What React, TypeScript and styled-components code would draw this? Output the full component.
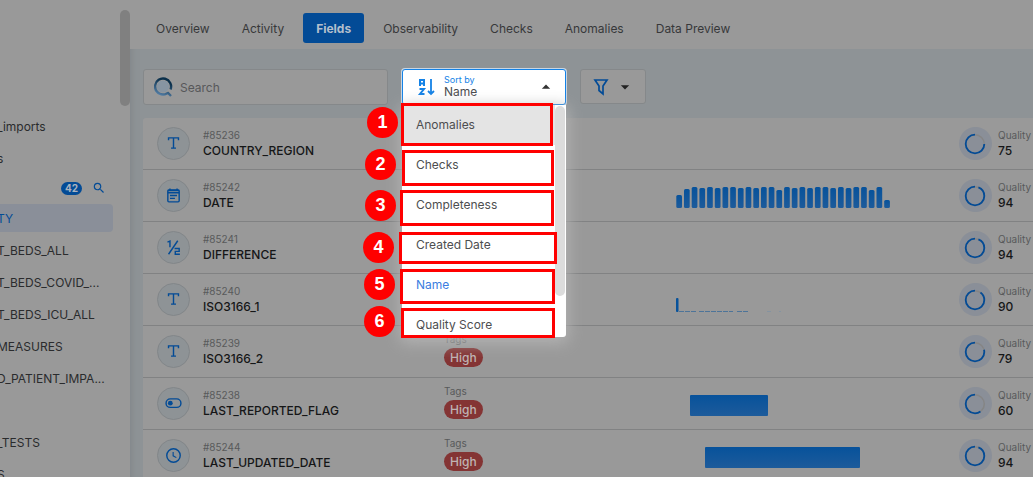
import React from 'react';
import styled, { createGlobalStyle } from 'styled-components';
import { MdArrowDropDown, MdArrowDropUp, MdSearch } from 'react-icons/md';

const GlobalStyle = createGlobalStyle`
  *, *::before, *::after { box-sizing: border-box; }
  body { margin: 0; background: #999999; color: #2a2b2d; font-family: Inter, 'Liberation Sans', sans-serif; font-size: 12px; }
  button, input { font: inherit; color: inherit; }
  ul { list-style: none; margin: 0; padding: 0; }
  a { color: inherit; text-decoration: none; }
`;

const Shell = styled.div`
  display: flex;
  height: 100vh;
  overflow: hidden;
`;

const Sidebar = styled.aside`
  display: flex;
  flex: 0 0 130px;
  justify-content: space-between;
  overflow: hidden;
`;

const SideContent = styled.div`
  width: 113px;
  padding-top: 112px;
`;

const ScrollThumb = styled.div`
  width: 10px;
  height: 96px;
  margin-top: 10px;
  border-radius: 5px;
  background: #808080;
`;

const SideLink = styled.a<{ $active?: boolean }>`
  display: flex;
  align-items: center;
  height: 28px;
  margin-bottom: 4px;
  text-indent: -3px;
  white-space: nowrap;
  border-radius: 0 4px 4px 0;
  background: ${(p) => (p.$active ? '#8a8f99' : 'transparent')};
  color: ${(p) => (p.$active ? '#034b96' : '#2a2b2d')};
`;

const SideTools = styled.div`
  display: flex;
  align-items: center;
  justify-content: flex-end;
  gap: 10px;
  height: 24px;
  margin-bottom: 4px;
  padding-right: 7px;
`;

const Count = styled.span`
  width: 21px;
  border-radius: 7px;
  background: #034b96;
  color: #aab4bf;
  font-size: 10px;
  font-weight: 700;
  line-height: 13px;
  text-align: center;
`;

const IconButton = styled.button`
  display: flex;
  padding: 0;
  border: 0;
  background: none;
  color: #034b96;
`;

const Main = styled.main`
  flex: 1;
  min-width: 0;
  background: #8e9396;
  box-shadow: inset 8px 0 8px -8px #7c8084;
`;

const Tabs = styled.nav`
  display: flex;
  align-items: flex-start;
  gap: 6px;
  height: 49px;
  padding: 13px 12px 0 13px;
  background: #999999;
`;

const Tab = styled.button<{ $active?: boolean }>`
  height: 30px;
  padding: 0 13px;
  border: 0;
  border-radius: 3px;
  white-space: nowrap;
  background: ${(p) => (p.$active ? '#034b96' : 'transparent')};
  color: ${(p) => (p.$active ? '#b3bfcc' : '#37383a')};
  font-weight: ${(p) => (p.$active ? 700 : 400)};
`;

const Toolbar = styled.div`
  display: flex;
  gap: 14px;
  padding: 20px 13px 13px;
`;

const SearchBox = styled.label`
  display: flex;
  align-items: center;
  gap: 4px;
  width: 245px;
  height: 36px;
  padding-left: 10px;
  border: 1px solid #85888a;
  border-radius: 3px;
  background: #999999;
`;

const SearchInput = styled.input`
  flex: 1;
  min-width: 0;
  border: 0;
  outline: 0;
  background: none;
  &::placeholder { color: #57585a; opacity: 1; }
`;

const SortWrap = styled.div`
  position: relative;
  width: 164px;
`;

const SortButton = styled.button`
  display: flex;
  align-items: center;
  width: 100%;
  height: 36px;
  padding: 0 9px 0 14px;
  border: 1px solid #1482e6;
  border-radius: 3px;
  background: #ffffff;
  color: #4a4b4d;
  text-align: left;
  box-shadow: 0 0 0 1px #c8d6e4;
`;

const SortText = styled.span`
  flex: 1;
  padding-left: 9px;
  line-height: 14px;
`;

const SortCaption = styled.span`
  display: block;
  color: #1482e6;
  font-size: 9px;
  line-height: 10px;
`;

const Menu = styled.ul`
  position: absolute;
  z-index: 2;
  top: 36px;
  left: 0;
  width: 164px;
  height: 232px;
  border-radius: 0 0 3px 3px;
  background: #ffffff;
  box-shadow: 0 4px 16px 2px #b4b4b4;
`;

const MenuItem = styled.li<{ $hover?: boolean; $selected?: boolean }>`
  width: 153px;
  height: 40px;
  padding-left: 14px;
  line-height: 40px;
  background: ${(p) => (p.$hover ? '#e4e4e4' : 'transparent')};
  color: ${(p) => (p.$selected ? '#3b7de0' : '#4d4e50')};
`;

const MenuThumb = styled.div`
  position: absolute;
  top: 1px;
  right: 1px;
  width: 10px;
  height: 190px;
  border-radius: 5px;
  background: #dcdcdc;
`;

const Outline = styled.div<{ $x: number; $y: number; $w: number; $h: number }>`
  position: absolute;
  z-index: 3;
  left: ${(p) => p.$x}px;
  top: ${(p) => p.$y}px;
  width: ${(p) => p.$w}px;
  height: ${(p) => p.$h}px;
  border: 3px solid #ff0000;
`;

const Marker = styled.span<{ $x: number; $y: number }>`
  position: absolute;
  z-index: 4;
  left: ${(p) => p.$x}px;
  top: ${(p) => p.$y}px;
  width: 31px;
  height: 31px;
  border-radius: 50%;
  background: #ff0000;
  color: #ffffff;
  font-family: 'Liberation Sans', sans-serif;
  font-size: 18px;
  font-weight: 700;
  line-height: 31px;
  text-align: center;
`;

const FilterButton = styled.button`
  display: flex;
  align-items: center;
  gap: 5px;
  width: 66px;
  height: 35px;
  padding: 0 10px 0 11px;
  border: 1px solid #85888a;
  border-radius: 3px;
  background: #999999;
`;

const List = styled.ul`
  margin-left: 13px;
  background: #999999;
  border-radius: 3px 0 0 0;
`;

const Row = styled.li`
  display: grid;
  grid-template-columns: 46px 241px 232px 1fr 74px;
  align-items: center;
  height: 52px;
  padding-left: 14px;
  border-bottom: 1px solid #818283;
`;

const Round = styled.span`
  display: flex;
  align-items: center;
  justify-content: center;
  width: 33px;
  height: 33px;
  border: 1px solid #828689;
  border-radius: 50%;
  background: #8e9396;
  color: #034b96;
`;

const Stack = styled.div`
  display: flex;
  flex-direction: column;
  align-items: flex-start;
`;

const TagStack = styled(Stack)`
  gap: 2px;
  padding-bottom: 4px;
`;

const Small = styled.span`
  color: #58595b;
  font-size: 10px;
  line-height: 14px;
`;

const Name = styled.span`
  color: #151617;
  font-weight: 500;
  line-height: 18px;
`;

const Tag = styled.span`
  height: 19px;
  padding: 0 6px;
  border-radius: 10px;
  background: #843434;
  color: #bfb3b3;
  font-weight: 500;
  line-height: 19px;
`;

const Quality = styled.div`
  display: flex;
  align-items: center;
  gap: 6px;
`;

const stroke = { fill: 'none', stroke: 'currentColor', strokeWidth: 2 } as const;

const icons: Record<string, React.ReactNode> = {
  text: <path {...stroke} d="M5 7.500V4H19V7.500M12 4V18.500M8.500 18.500H15.500" />,
  date: (
    <>
      <rect {...stroke} x="4" y="4" width="16" height="17" rx="1.500" />
      <path {...stroke} d="M4 5H20M4 8H20M7 2V5M17 2V5M7 12H17M7 16H14" />
    </>
  ),
  fraction: <path {...stroke} d="M3.500 4.500L7 3V11.500M18 2.500L5 21.500M13.500 13.500H20V17.500H14.500V21.500H21" />,
  toggle: (
    <>
      <rect {...stroke} x="1.500" y="5.500" width="21" height="12" rx="6" />
      <circle cx="7.500" cy="11.500" r="3.400" fill="currentColor" />
    </>
  ),
  clock: (
    <>
      <circle {...stroke} cx="12" cy="12" r="9.500" />
      <path {...stroke} strokeWidth={1.600} d="M11.500 7V12.500L16 15" />
    </>
  ),
};

const TypeIcon = ({ kind }: { kind: string }) => (
  <svg width="17" height="17" viewBox="0 0 24 24" aria-hidden="true">{icons[kind]}</svg>
);

const Ring = ({ value }: { value: number }) => (
  <svg width="33" height="33" viewBox="0 0 33 33" aria-hidden="true">
    <circle cx="16.500" cy="16.500" r="16.500" fill="#8a8f98" />
    <circle cx="16" cy="17" r="9.300" fill="none" stroke="#858585" strokeWidth="1.500" />
    <circle
      cx="16" cy="17" r="9.300" fill="none" stroke="#034b96" strokeWidth="1.800"
      pathLength={100} strokeDasharray={`${value} 100`} transform="matrix(0 -1 -1 0 33 33)"
    />
  </svg>
);

const bars = [13, 19, 21, 20, 21, 20, 21, 21, 20, 21, 20, 21, 21, 18, 21, 20, 21, 20, 21, 21, 20, 21, 20, 21, 21, 18, 21, 8];

const Chart = ({ kind }: { kind?: string }) => (
  <svg width="220" height="24" viewBox="0 0 220 24" aria-hidden="true">
    <defs>
      <linearGradient id="bar" x1="0" y1="0" x2="0" y2="1">
        <stop offset="0" stopColor="#07529b" />
        <stop offset="1" stopColor="#1d5b9b" />
      </linearGradient>
    </defs>
    {kind === 'bars' && bars.map((h, i) => (
      <rect key={i} x={i * 7.700 + 0.300} y={24 - h} width="5.700" height={h} rx="1.500" fill="url(#bar)" />
    ))}
    {kind === 'tail' && (
      <>
        <rect x="0" y="10" width="2.500" height="14" rx="1" fill="#07529b" />
        <path d="M3 23.500H20M23 23.500H57M61 23.500H72" stroke="#4d7499" strokeDasharray="5 1" />
        <path d="M91 23.500H95M103 23.500H105" stroke="#8593a0" />
      </>
    )}
    {kind === 'short' && <rect x="14" y="3" width="78" height="21" rx="1" fill="url(#bar)" />}
    {kind === 'long' && <rect x="29" y="3" width="155" height="21" rx="1" fill="url(#bar)" />}
  </svg>
);

const rows = [
  { id: '#85236', name: 'COUNTRY_REGION', icon: 'text', score: 75 },
  { id: '#85242', name: 'DATE', icon: 'date', score: 94, chart: 'bars' },
  { id: '#85241', name: 'DIFFERENCE', icon: 'fraction', score: 94 },
  { id: '#85240', name: 'ISO3166_1', icon: 'text', score: 90, chart: 'tail' },
  { id: '#85239', name: 'ISO3166_2', icon: 'text', score: 79, tag: 'High' },
  { id: '#85238', name: 'LAST_REPORTED_FLAG', icon: 'toggle', score: 60, tag: 'High', chart: 'short' },
  { id: '#85244', name: 'LAST_UPDATED_DATE', icon: 'clock', score: 94, tag: 'High', chart: 'long' },
];

const tabs = ['Overview', 'Activity', 'Fields', 'Observability', 'Checks', 'Anomalies', 'Data Preview'];
const options = ['Anomalies', 'Checks', 'Completeness', 'Created Date', 'Name', 'Quality Score'];
const tables = ['TY', 'T_BEDS_ALL', 'T_BEDS_COVID_...', 'T_BEDS_ICU_ALL', 'MEASURES', 'D_PATIENT_IMPA...', '', '_TESTS', 'S'];

const callouts = [
  { x: -1, y: 34, w: 152, h: 43, mx: -35, my: 38 },
  { x: 0, y: 81, w: 152, h: 36, mx: -37, my: 80 },
  { x: -2, y: 121, w: 154, h: 36, mx: -37, my: 121 },
  { x: -3, y: 163, w: 158, h: 32, mx: -39, my: 163 },
  { x: -2, y: 200, w: 155, h: 35, mx: -38, my: 200 },
  { x: -1, y: 239, w: 154, h: 30, mx: -38, my: 237 },
];

export default function App() {
  return (
    <Shell>
      <GlobalStyle />
      <Sidebar>
        <SideContent>
          <SideLink href="#imports">_imports</SideLink>
          <SideLink href="#s">s</SideLink>
          <SideTools>
            <Count>42</Count>
            <IconButton aria-label="Search tables"><MdSearch size={14} /></IconButton>
          </SideTools>
          {tables.map((label, i) => (
            <SideLink key={i} href="#table" $active={i === 0}>{label}</SideLink>
          ))}
        </SideContent>
        <ScrollThumb />
      </Sidebar>
      <Main>
        <Tabs>
          {tabs.map((t) => <Tab key={t} $active={t === 'Fields'}>{t}</Tab>)}
        </Tabs>
        <Toolbar>
          <SearchBox>
            <svg width="20" height="20" viewBox="0 0 20 20" aria-hidden="true">
              <defs>
                <linearGradient id="logo" x1="0.800" y1="0" x2="0.400" y2="1">
                  <stop offset="0.200" stopColor="#0b304b" />
                  <stop offset="1" stopColor="#527da5" />
                </linearGradient>
              </defs>
              <circle cx="9" cy="9.500" r="6" fill="#8795a2" />
              <path d="M16.500 12.500A8 8 0 1 0 9 17.500C12 17.500 13 16 14 16L17 19" fill="none" stroke="url(#logo)" strokeWidth="2.400" />
            </svg>
            <SearchInput placeholder="Search" aria-label="Search" />
          </SearchBox>
          <SortWrap>
            <SortButton aria-haspopup="listbox" aria-expanded="true">
              <svg width="18" height="18" viewBox="0 0 18 18" fill="none" stroke="#1482e6" strokeWidth="2" aria-hidden="true">
                <path d="M3 8V2H7V8M3 5.500H7M2.500 11H7L3 16H7.500" />
                <path d="M14 1V15M11 13L14 16L17 13" strokeWidth="1.800" />
              </svg>
              <SortText><SortCaption>Sort by</SortCaption>Name</SortText>
              <MdArrowDropUp size={20} color="#333333" />
            </SortButton>
            <Menu role="listbox">
              {options.map((o) => (
                <MenuItem key={o} role="option" $hover={o === 'Anomalies'} $selected={o === 'Name'}>{o}</MenuItem>
              ))}
              <MenuThumb />
            </Menu>
            {callouts.map((c, i) => (
              <React.Fragment key={i}>
                <Outline $x={c.x} $y={c.y} $w={c.w} $h={c.h} />
                <Marker $x={c.mx} $y={c.my}>{i + 1}</Marker>
              </React.Fragment>
            ))}
          </SortWrap>
          <FilterButton aria-label="Filter">
            <svg width="18" height="18" viewBox="0 0 18 18" fill="none" stroke="#034b96" strokeWidth="1.700" aria-hidden="true">
              <path d="M3 2H15L11 8V16L7 12.500V8Z" />
            </svg>
            <MdArrowDropDown size={20} color="#222222" />
          </FilterButton>
        </Toolbar>
        <List>
          {rows.map((r) => (
            <Row key={r.id}>
              <Round><TypeIcon kind={r.icon} /></Round>
              <Stack><Small>{r.id}</Small><Name>{r.name}</Name></Stack>
              <TagStack>{r.tag && (<><Small>Tags</Small><Tag>{r.tag}</Tag></>)}</TagStack>
              <Chart kind={r.chart} />
              <Quality>
                <Ring value={r.score} />
                <Stack><Small>Quality</Small><Name>{r.score}</Name></Stack>
              </Quality>
            </Row>
          ))}
        </List>
      </Main>
    </Shell>
  );
}
